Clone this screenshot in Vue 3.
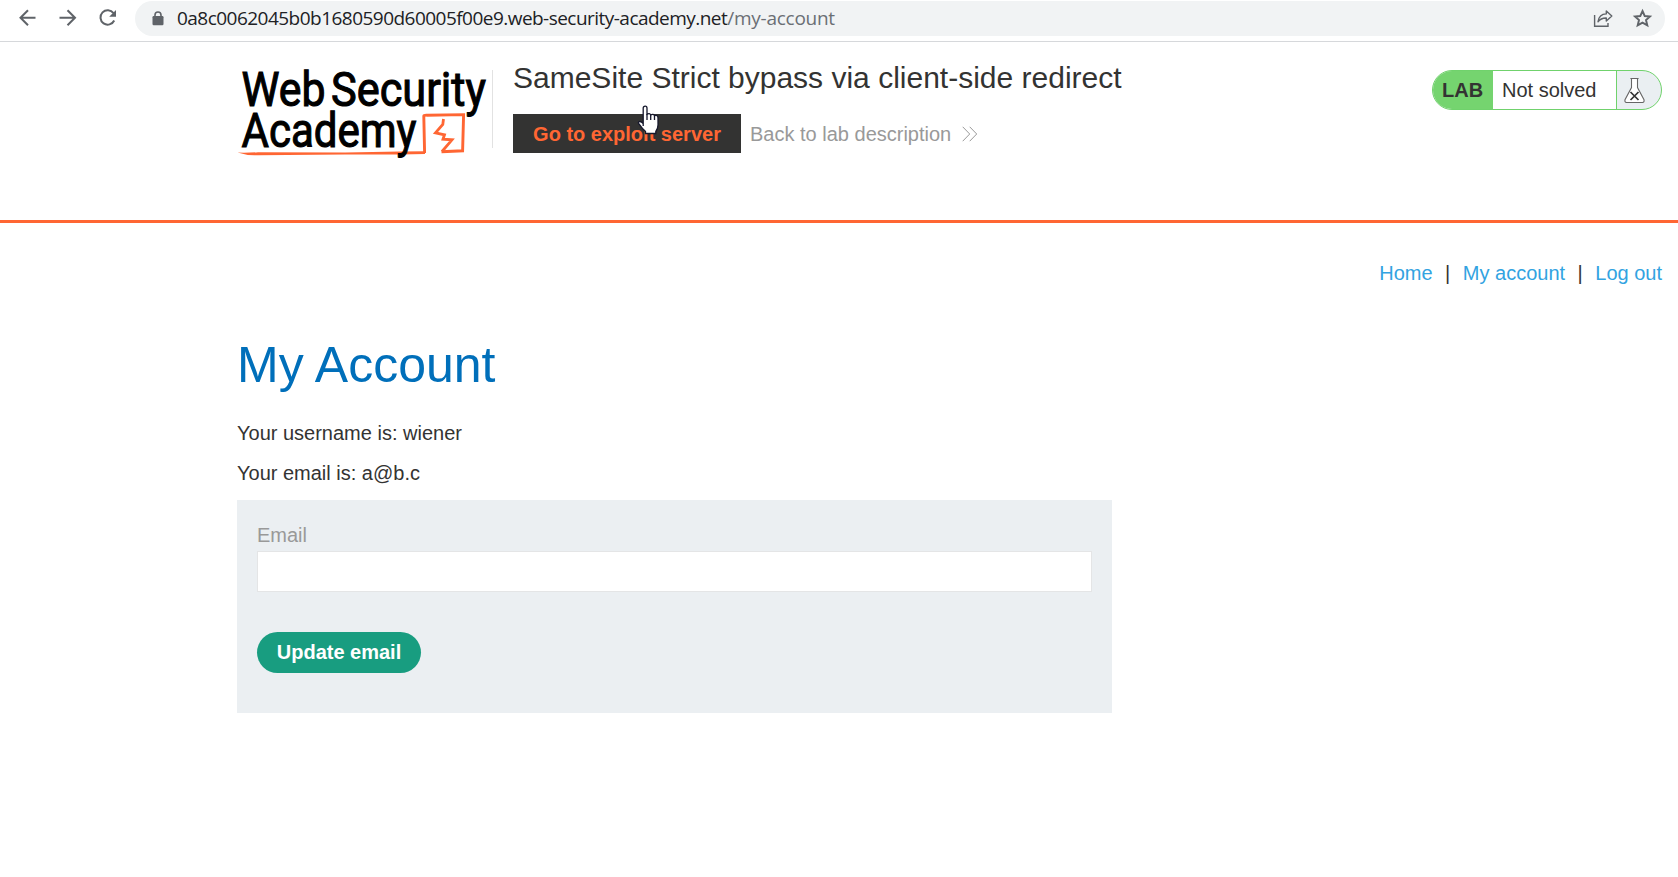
<script setup>
const links = ['Home', 'My account', 'Log out']
</script>

<template>
  <div class="page">
    <div class="browser">
      <svg class="tools" width="130" height="41" viewBox="0 0 130 41" fill="none" stroke="#5f6368" stroke-width="2">
        <path d="M35.5 17.7H21M28 10.2L20.5 17.7L28 25.2" />
        <path d="M59.5 17.7H74.5M67.5 10.2L75 17.7L67.5 25.2" />
        <path d="M113.5 13.2A7.2 7.2 0 1 0 114.2 20.5" />
        <path d="M116 10V16.8H109.2Z" fill="#5f6368" stroke="none" />
      </svg>
      <div class="address">
        <svg class="lock" width="12" height="15" viewBox="0 0 12 15">
          <path d="M3 6V4a3 3 0 0 1 6 0v2" fill="none" stroke="#5f6368" stroke-width="1.6" />
          <rect x="0.5" y="5" width="11" height="9.2" rx="1.2" fill="#5f6368" />
        </svg>
        <div class="url"><span class="host">0a8c0062045b0b1680590d60005f00e9.web-security-academy.net</span><span class="path">/my-account</span></div>
        <svg class="actions" width="80" height="35" viewBox="1585 1 80 35" fill="none" stroke="#5f6368">
          <path d="M1594.6 15V26.3H1608V23" stroke-width="1.4" />
          <path d="M1598 21.8C1598.7 16.5 1602 14 1606.3 13.9V11L1611.8 16L1606.3 21V18C1602.5 17.9 1600 19 1598 21.8Z" stroke-width="1.4" stroke-linejoin="round" />
          <path d="M1642.5 11L1644.7 16L1650 16.5L1646 20.1L1647.3 25.4L1642.5 22.6L1637.7 25.4L1639 20.1L1635 16.5L1640.3 16Z" stroke-width="1.9" />
        </svg>
      </div>
    </div>

    <header class="lab">
      <div class="logo">
        <svg width="256" height="100" viewBox="237 62 256 100">
          <path d="M237.5 152.6Q247 153 258 152.2L345 152.4L400 151.6L425 151.2V154L400 154.6L345 154.4L258 155.2Q247 155.8 237.5 152.6Z" fill="#ff6633" />
          <path d="M424.6 153L423.8 116Q424 115 427 115.2L463.6 114.6L462.6 150.8L441.5 151.8" fill="none" stroke="#ff6633" stroke-width="2.9" />
          <path d="M443.5 119L442.8 124.5L435.5 132.8L444.5 134.8L443 139.2L452 139.8L442 151.5" fill="none" stroke="#ff6633" stroke-width="2.8" />
          <g class="brand">
            <text x="241.5" y="106" textLength="84" lengthAdjust="spacingAndGlyphs">Web</text>
            <text x="331" y="106" textLength="155" lengthAdjust="spacingAndGlyphs">Security</text>
            <text x="241.5" y="147" textLength="175" lengthAdjust="spacingAndGlyphs">Academy</text>
          </g>
        </svg>
      </div>
      <div class="info">
        <h2>SameSite Strict bypass via client-side redirect</h2>
        <div class="lab-links">
          <a class="exploit">Go to exploit server</a>
          <a class="back">Back to lab description</a>
          <svg class="chev" width="16" height="18" viewBox="0 0 16 18" fill="none" stroke="#999">
            <path d="M.7 1.8L7.7 9L.7 16.2M7.7 1.8L14.7 9L7.7 16.2" />
          </svg>
        </div>
      </div>
      <div class="status">
        <b>LAB</b>
        <span>Not solved</span>
        <i>
          <svg width="22" height="27" viewBox="0 0 22 27">
            <path d="M6.4 1.5H14.6M7.5 1.5V10.5L1 22.7Q.5 25.5 2.5 25.5H18.5Q20.5 25.5 20 22.7L13.5 10.5V1.5Z" fill="#fff" stroke="#666" stroke-width="1.1" />
            <path d="M6.5 15L14.5 23M14.5 15L6.5 23" stroke="#333" stroke-width="1.7" />
          </svg>
        </i>
      </div>
    </header>

    <nav>
      <template v-for="(l, i) in links" :key="l">
        <span v-if="i">|</span><a>{{ l }}</a>
      </template>
    </nav>

    <main>
      <h1>My Account</h1>
      <p>Your username is: wiener</p>
      <p>Your email is: a@b.c</p>
      <form @submit.prevent>
        <label for="email">Email</label>
        <input id="email" type="email" />
        <button type="submit">Update email</button>
      </form>
    </main>

    <svg class="pointer" width="24" height="32" viewBox="0 0 24 32">
      <path d="M6.2 21V3.2Q6.2 1.2 8.2 1.2Q10 1.2 10 3.2V9.2Q12.5 7.7 13.7 9.8Q16.5 8.5 17.5 10.7Q21 9.7 21 13V20Q21 23.5 18.8 26.5V28.5H8.5V26.5Q5 23.2 2.7 19.8Q.7 17.7 1.7 16.9Q3.6 15.5 6.2 18.7Z" fill="#fff" stroke="#16182c" stroke-width="1.3" />
      <path d="M10 9V15M13.7 10V15M17.5 11V15" stroke="#16182c" stroke-width="1.3" />
    </svg>
  </div>
</template>

<style>
body { margin: 0; background: #fff; }
</style>

<style scoped>
* { box-sizing: border-box; }
.page {
  position: relative;
  width: 1678px;
  height: 877px;
  overflow: hidden;
  background: #fff;
  color: #333332;
  font: 20px/24px "Liberation Sans", Arial, sans-serif;
}
.browser { display: flex; height: 42px; border-bottom: 1px solid #d6d8db; }
.tools { flex: none; width: 135px; height: 41px; padding-right: 5px; }
.address {
  display: flex;
  width: 1530px;
  height: 35px;
  margin-top: 1px;
  padding-left: 17px;
  border-radius: 18px;
  background: #f1f3f4;
}
.lock { margin-top: 10px; }
.url {
  margin-left: 13px;
  font: 19px/35px "Open Sans", "Noto Sans", sans-serif;
  white-space: nowrap;
}
.host { color: #202124; letter-spacing: -0.53px; }
.path { color: #6b6f74; letter-spacing: -0.26px; }
.actions { margin-left: auto; }
.lab {
  display: flex;
  height: 181px;
  padding: 20px 16px 0 237px;
  border-bottom: 3px solid #ff6633;
}
.logo { position: relative; width: 256px; height: 100px; }
.logo svg { overflow: visible; }
.brand { font: 400 48px Roboto, sans-serif; fill: #000; stroke: #000; stroke-width: 1.1px; }
.logo::after {
  content: "";
  position: absolute;
  left: 255px;
  top: 8px;
  width: 1px;
  height: 78px;
  background: #e2e2e2;
}
.info { margin-left: 20px; }
h2 { margin: -2px 0 0; font-size: 30px; line-height: 36px; font-weight: 400; white-space: nowrap; }
.lab-links { display: flex; align-items: center; margin-top: 18px; color: #999; white-space: nowrap; }
.exploit {
  width: 228px;
  height: 39px;
  background: #333332;
  color: #ff6633;
  font-weight: 700;
  line-height: 41px;
  text-align: center;
}
.back { height: 39px; margin-left: 9px; line-height: 41px; }
.chev { margin-left: 11px; }
.status {
  display: flex;
  width: 230px;
  height: 40px;
  margin: 8px 0 0 auto;
  border: 1px solid #70d26c;
  border-radius: 20px;
  background: #eaeff2;
  line-height: 38px;
  overflow: hidden;
}
.status b { width: 60px; padding-left: 9px; background: #75d46f; }
.status span { width: 124px; padding-left: 9px; background: #fff; border-right: 1px solid #70d26c; }
.status i { padding: 6px 0 0 7px; line-height: 0; }
nav {
  display: flex;
  justify-content: flex-end;
  gap: 12.5px;
  margin-top: 38px;
  padding-right: 16px;
}
nav a { color: #32a3e1; }
main { width: 875px; margin: 46px 0 0 237px; }
h1 { margin: 0; color: #006fba; font-size: 50px; line-height: 68px; font-weight: 400; }
p { margin: 0 0 16px; }
h1 + p { margin-top: 22px; }
form {
  display: flex;
  flex-direction: column;
  align-items: flex-start;
  height: 213px;
  margin-top: -1px;
  padding: 23px 20px 0;
  background: #ebeff2;
}
label { color: #999; }
input {
  width: 835px;
  height: 41px;
  margin-top: 4px;
  border: 1px solid #e4e5e6;
  border-radius: 0;
  background: #fff;
  font: inherit;
}
button {
  width: 164px;
  height: 41px;
  margin-top: 40px;
  padding: 0;
  border: 0;
  border-radius: 21px;
  background: #189d80;
  color: #fff;
  font: 700 20px/41px "Liberation Sans", Arial, sans-serif;
}
.pointer { position: absolute; left: 637px; top: 105px; }
</style>
